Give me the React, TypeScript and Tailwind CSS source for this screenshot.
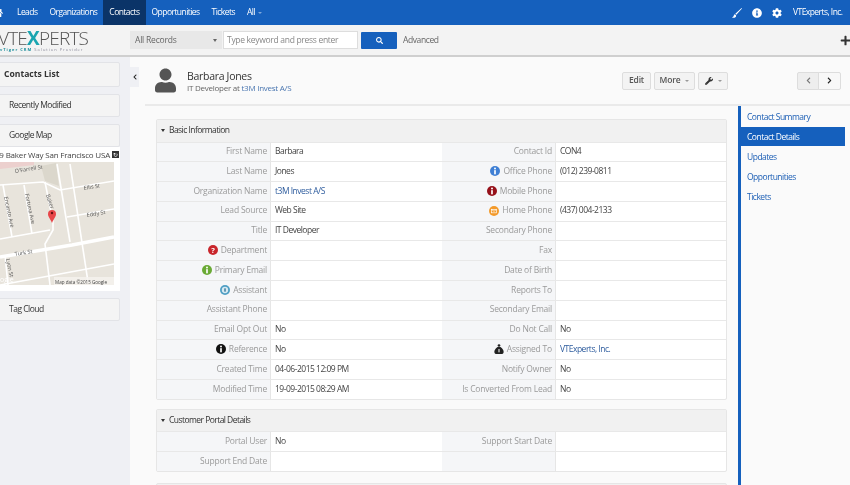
import { FaChevronLeft, FaChevronRight, FaCog, FaHome, FaInfoCircle, FaPlus, FaSearch, FaUser, FaWrench } from 'react-icons/fa';
import type { ReactNode } from 'react';

const navItems = ['Leads', 'Organizations', 'Contacts', 'Opportunities', 'Tickets'];

function Dot({ color, children }: { color: string; children: ReactNode }) {
  return (
    <svg viewBox="0 0 12 12" className="mr-[3px] h-[10px] w-[10px] shrink-0">
      <circle cx="6" cy="6" r="6" fill={color} />
      {children}
    </svg>
  );
}

const letterI = (
  <>
    <rect x="5" y="5" width="2" height="5" fill="#fff" />
    <circle cx="6" cy="3" r="1.2" fill="#fff" />
  </>
);

const icons: Record<string, ReactNode> = {
  Department: (
    <Dot color="#c9262c">
      <text x="6" y="9.5" textAnchor="middle" fontSize="9" fontWeight="700" fill="#fff" fontFamily="Open Sans">?</text>
    </Dot>
  ),
  'Primary Email': <Dot color="#6aaa35">{letterI}</Dot>,
  Assistant: (
    <Dot color="#4f9fc4">
      <circle cx="6" cy="6" r="3.8" fill="#d6e9f2" />
      <rect x="5.2" y="4" width="1.6" height="4" fill="#2a6f92" />
    </Dot>
  ),
  Reference: <Dot color="#111">{letterI}</Dot>,
  'Office Phone': <Dot color="#3f7fd4">{letterI}</Dot>,
  'Mobile Phone': <Dot color="#96111a">{letterI}</Dot>,
  'Home Phone': (
    <Dot color="#f39a2b">
      <rect x="3" y="4" width="6" height="4.2" fill="none" stroke="#fff" strokeWidth="0.8" />
      <path d="M3 4l3 2.4L9 4" fill="none" stroke="#fff" strokeWidth="0.8" />
    </Dot>
  ),
  'Assigned To': (
    <svg viewBox="0 0 12 12" className="mr-[3px] h-[10px] w-[10px] shrink-0">
      <circle cx="6" cy="1.8" r="1.6" fill="#222" />
      <path d="M4.2 3.6h3.6C10.5 5.5 12 8 11.5 10.2 11.2 11.6 10 12 9 12H3C2 12 .8 11.6.5 10.2 0 8 1.5 5.5 4.2 3.6z" fill="#222" />
      <rect x="5.4" y="6" width="1.2" height="4" fill="#fff" />
    </svg>
  ),
};

type Cell = { label: string; value?: string; link?: boolean };

const basicRows: [Cell, Cell][] = [
  [{ label: 'First Name', value: 'Barbara' }, { label: 'Contact Id', value: 'CON4' }],
  [{ label: 'Last Name', value: 'Jones' }, { label: 'Office Phone', value: '(012) 239-0811' }],
  [{ label: 'Organization Name', value: 't3M Invest A/S', link: true }, { label: 'Mobile Phone' }],
  [{ label: 'Lead Source', value: 'Web Site' }, { label: 'Home Phone', value: '(437) 004-2133' }],
  [{ label: 'Title', value: 'IT Developer' }, { label: 'Secondary Phone' }],
  [{ label: 'Department' }, { label: 'Fax' }],
  [{ label: 'Primary Email' }, { label: 'Date of Birth' }],
  [{ label: 'Assistant' }, { label: 'Reports To' }],
  [{ label: 'Assistant Phone' }, { label: 'Secondary Email' }],
  [{ label: 'Email Opt Out', value: 'No' }, { label: 'Do Not Call', value: 'No' }],
  [{ label: 'Reference', value: 'No' }, { label: 'Assigned To', value: 'VTExperts, Inc.', link: true }],
  [{ label: 'Created Time', value: '04-06-2015 12:09 PM' }, { label: 'Notify Owner', value: 'No' }],
  [{ label: 'Modified Time', value: '19-09-2015 08:29 AM' }, { label: 'Is Converted From Lead', value: 'No' }],
];

const portalRows: [Cell, Cell][] = [
  [{ label: 'Portal User', value: 'No' }, { label: 'Support Start Date' }],
  [{ label: 'Support End Date' }, { label: '' }],
];

function FieldCells({ cell }: { cell: Cell }) {
  return (
    <>
      <div className="flex items-center justify-end border-r border-[#e6e6e6] bg-[#f5f6f8] pb-[1px] pr-[3px] text-[8.5px] tracking-[-0.2px] text-[#9a9a9a]">
        {icons[cell.label]}
        {cell.label}
      </div>
      <div className={`flex items-center pb-[1px] pl-1 text-[8.5px] tracking-[-0.5px] ${cell.link ? 'text-[#2f5d9e]' : 'text-[#444]'}`}>{cell.value}</div>
    </>
  );
}

function Block({ title, rows }: { title: string; rows: [Cell, Cell][] }) {
  return (
    <section className="ml-[11px] w-[571px] rounded-[2px] border border-[#e6e6e6] bg-white">
      <div className="flex h-[21.5px] items-center gap-[3px] bg-[#f1f1f1] pl-[4px] text-[8.5px] tracking-[-0.55px] text-[#333]">
        <span className="h-0 w-0 border-x-[2.5px] border-t-[3.5px] border-x-transparent border-t-[#333]" />
        <span className="ml-[1px]">{title}</span>
      </div>
      {rows.map((row, i) => (
        <div key={i} className="grid h-[19.8px] grid-cols-[114px_171px_114px_170px] border-t border-[#e8e8e8]">
          <FieldCells cell={row[0]} />
          <FieldCells cell={row[1]} />
        </div>
      ))}
    </section>
  );
}

function SideHead({ children, bold }: { children: ReactNode; bold?: boolean }) {
  return (
    <div className={`flex items-center rounded-[2px] border border-[#e2e3e7] bg-[#f4f4f4] ${bold ? 'h-[25px] pl-1 text-[8.6px] font-bold text-[#333]' : 'h-[23px] pl-[8px] text-[8.5px] tracking-[-0.5px] text-[#333]'}`}>
      {children}
    </div>
  );
}

function MapPicture() {
  return (
    <svg viewBox="0 0 114 123" className="block h-[123px] w-[114px]">
      <rect width="114" height="123" fill="#e8e4dc" />
      <path d="M0 0h34v3L0 7z" fill="#ecd0ce" />
      <path d="M41 4l15-3 3 23-14-5z" fill="#dbd7cc" />
      <g fill="none" stroke="#fff" strokeWidth="1.6">
        <path d="M0 23l43-3 17 8 54-9" />
        <path d="M67 55l47-8" />
        <path d="M0 77l50-9" />
        <path d="M0 95l72-12 42-8" strokeWidth="3.5" />
        <path d="M0 123l114-21" />
        <path d="M57 2l13 78" />
        <path d="M70 2l18 118" />
        <path d="M3 23l9 52" />
        <path d="M24 23l8 49" />
        <path d="M45 20l8 40v8l-8 14 5 41" />
        <path d="M5 93l3 30" />
      </g>
      <g fill="#555" fontSize="5.5" fontFamily="Open Sans">
        <text x="15" y="11" transform="rotate(-9 15 11)">O'Farrell St</text>
        <text x="84" y="28" transform="rotate(-9 84 28)">Ellis St</text>
        <text x="87" y="55" transform="rotate(-9 87 55)">Eddy St</text>
        <text x="15" y="94" transform="rotate(-9 15 94)">Turk St</text>
        <text x="4" y="35" transform="rotate(78 4 35)">Encanto Ave</text>
        <text x="25" y="32" transform="rotate(78 25 32)">Fortuna Ave</text>
        <text x="46" y="33" transform="rotate(72 46 33)">Baker</text>
        <text x="6" y="97" transform="rotate(78 6 97)">Lyon St</text>
      </g>
      <path d="M52 61c-2-5-4-6-4-9a4 4 0 0 1 8 0c0 3-2 4-4 9z" fill="#e8474a" />
      <circle cx="52" cy="51" r="1.2" fill="#611" />
      <text x="0" y="120" fontSize="7" fill="#fff" fontFamily="Open Sans">ogle</text>
      <rect x="54" y="115" width="60" height="8" fill="#f5f3ef" opacity="0.8" />
      <text x="55" y="121.5" fontSize="4.6" fill="#444" fontFamily="Open Sans">Map data ©2015 Google</text>
    </svg>
  );
}

export default function App() {
  return (
    <div className="flex h-[485px] w-[850px] flex-col overflow-hidden bg-[#fafafa] font-['Open_Sans',sans-serif] blur-[0.3px]">
      <header className="flex h-[25px] shrink-0 items-center bg-[#1560bd] text-[8.5px] tracking-[-0.55px] text-white">
        <FaHome className="ml-[-7px] h-[10px] w-[10px]" />
        <nav className="ml-[8px] flex h-full items-center">
          {navItems.map(item => (
            <a key={item} className={`flex h-full items-center px-[6px] ${item === 'Contacts' ? 'bg-[#0b3468]' : ''}`}>
              {item}
            </a>
          ))}
          <a className="flex h-full items-center gap-[3px] px-[6px]">
            All <span className="h-0 w-0 border-x-[2px] border-t-[2.5px] border-x-transparent border-t-[#7fa8dc]" />
          </a>
        </nav>
        <div className="ml-auto flex items-center">
          <svg viewBox="0 0 12 12" className="mr-[10px] h-[10px] w-[10px]">
            <path d="M11.5 0L4 7l1.2 1.2L12 .6zM3.4 7.6C1.8 8 2.6 10.6 0 11.4 3 12.4 5.6 11 4.8 8.8z" fill="#fff" />
          </svg>
          <FaInfoCircle className="mr-[10px] h-[10px] w-[10px]" />
          <FaCog className="mr-[11px] h-[10px] w-[10px]" />
          <span className="mr-[7px] w-[50px] whitespace-nowrap">VTExperts, Inc.</span>
        </div>
      </header>

      <div className="flex h-[32px] shrink-0 items-center border-b-2 border-[#cfcfcf] bg-[#f3f3f3]">
        <div className="ml-[-2px] w-[132px] shrink-0">
          <div className="whitespace-nowrap text-[19px] font-light leading-[18px] tracking-[-0.8px] text-[#555]">
            VTE<span className="font-bold text-[#1aa5b0]">X</span>PERTS
          </div>
          <div className="ml-[2px] whitespace-nowrap text-[4px] leading-[5px] tracking-[1px] text-[#889]">
            <span className="font-bold text-[#1f8f9c]">vTiger CRM</span> Solution Provider
          </div>
        </div>
        <div className="flex h-[18px] w-[92px] items-center justify-between bg-[#e8e8e8] pl-[5px] pr-[5px] text-[8.5px] tracking-[-0.2px] text-[#666]">
          All Records
          <span className="h-0 w-0 border-x-[2px] border-t-[3px] border-x-transparent border-t-[#666]" />
        </div>
        <div className="ml-[1px] flex h-[18px] w-[135px] items-center border border-[#ddd] bg-white pl-[3px] text-[8.5px] tracking-[-0.3px] text-[#888]">
          Type keyword and press enter
        </div>
        <button className="ml-[3px] flex h-[17px] w-[36px] items-center justify-center rounded-[1px] bg-[#1560bd] text-white">
          <FaSearch className="h-[7px] w-[7px]" />
        </button>
        <span className="ml-[6px] text-[8.5px] tracking-[-0.4px] text-[#666]">Advanced</span>
        <FaPlus className="ml-auto mr-[-1px] h-[11px] w-[11px] text-[#333]" />
      </div>

      <div className="flex min-h-0 flex-1">
        <aside className="ml-[-4px] w-[134px] shrink-0 bg-[#eff0f4] pr-[10px] pt-[5px]">
          <SideHead bold>
            <span className="ml-[3px]">Contacts List</span>
          </SideHead>
          <div className="mt-[7px]">
            <SideHead>
              <span className="ml-[4px]">Recently Modified</span>
            </SideHead>
          </div>
          <div className="mt-[7px]">
            <SideHead>
              <span className="ml-[4px]">Google Map</span>
            </SideHead>
            <div className="bg-white pb-[6px]">
              <div className="flex h-[15px] items-center justify-between overflow-hidden whitespace-nowrap text-[8px] tracking-[-0.2px] text-[#444]">
                <span className="ml-[-1px]">49 Baker Way San Francisco USA</span>
                <span className="mr-[1px] flex h-[7px] w-[7px] shrink-0 items-center justify-center bg-[#333] text-[6px] leading-none text-white">↻</span>
              </div>
              <div className="ml-[4px]">
                <MapPicture />
              </div>
            </div>
          </div>
          <div className="mt-[7px]">
            <SideHead>
              <span className="ml-[4px]">Tag Cloud</span>
            </SideHead>
          </div>
        </aside>

        <main className="flex min-w-0 flex-1">
          <div className="w-[15px] shrink-0 pt-[10px]">
            <div className="flex h-[20px] w-[9px] items-center justify-center bg-[#eff0f4] text-[#222]">
              <FaChevronLeft className="h-[6px] w-[6px]" />
            </div>
          </div>
          <div className="flex min-w-0 flex-1 flex-col">
            <div className="flex h-[49px] shrink-0 items-center border-b-2 border-[#eaeaea] pr-[9px]">
              <FaUser className="ml-[10px] h-[25px] w-[21px] text-[#555]" />
              <div className="ml-[11px]">
                <h1 className="text-[10.5px] leading-[14px] tracking-[-0.3px] text-[#333]">Barbara Jones</h1>
                <p className="text-[8px] leading-[10px] tracking-[-0.25px] text-[#666]">
                  IT Developer at <span className="text-[#4a76b0]">t3M Invest A/S</span>
                </p>
              </div>
              <div className="ml-auto flex items-center gap-[3px] text-[8.5px] font-semibold tracking-[-0.2px] text-[#555]">
                <button className="h-[18px] w-[29px] rounded-[2px] border border-[#ddd] bg-[#f3f3f3]">Edit</button>
                <button className="flex h-[18px] w-[41px] items-center justify-center gap-[5px] rounded-[2px] border border-[#ddd] bg-[#f3f3f3]">
                  More <span className="h-0 w-0 border-x-[2px] border-t-[2.5px] border-x-transparent border-t-[#999]" />
                </button>
                <button className="flex h-[18px] w-[30px] items-center justify-center gap-[5px] rounded-[2px] border border-[#ddd] bg-[#f3f3f3]">
                  <FaWrench className="h-[8px] w-[8px] text-[#333]" />
                  <span className="h-0 w-0 border-x-[2px] border-t-[2.5px] border-x-transparent border-t-[#999]" />
                </button>
                <div className="ml-[66px] flex">
                  <button className="flex h-[18px] w-[22px] items-center justify-center rounded-l-[2px] border border-[#ddd] bg-[#eeeeee] text-[#777]">
                    <FaChevronLeft className="h-[7px] w-[7px]" />
                  </button>
                  <button className="ml-[-1px] flex h-[18px] w-[23px] items-center justify-center rounded-r-[2px] border border-[#ddd] bg-[#f8f8f8] text-[#222]">
                    <FaChevronRight className="h-[7px] w-[7px]" />
                  </button>
                </div>
              </div>
            </div>
            <div className="flex min-h-0 flex-1">
              <div className="w-[593px] shrink-0 pt-[13px]">
                <Block title="Basic Information" rows={basicRows} />
                <div className="mt-[9px]">
                  <Block title="Customer Portal Details" rows={portalRows} />
                </div>
                <div className="ml-[11px] mt-[11px] h-[20px] w-[571px] rounded-[2px] border border-[#e6e6e6] bg-[#f1f1f1]" />
              </div>
              <nav className="w-[107px] shrink-0 border-l-[3px] border-[#1560bd] text-[8.5px] tracking-[-0.5px] text-[#1d5fb5]">
                <a className="block pl-[6px] pt-[5px] leading-[12px]">Contact Summary</a>
                <a className="mt-[4px] flex h-[19px] items-center bg-[#1560bd] pl-[6px] pt-[1px] text-white">Contact Details</a>
                <a className="mt-[5px] block pl-[6px] leading-[12px]">Updates</a>
                <a className="mt-[8px] block pl-[6px] leading-[12px]">Opportunities</a>
                <a className="mt-[8px] block pl-[6px] leading-[12px]">Tickets</a>
              </nav>
            </div>
          </div>
        </main>
      </div>
    </div>
  );
}
